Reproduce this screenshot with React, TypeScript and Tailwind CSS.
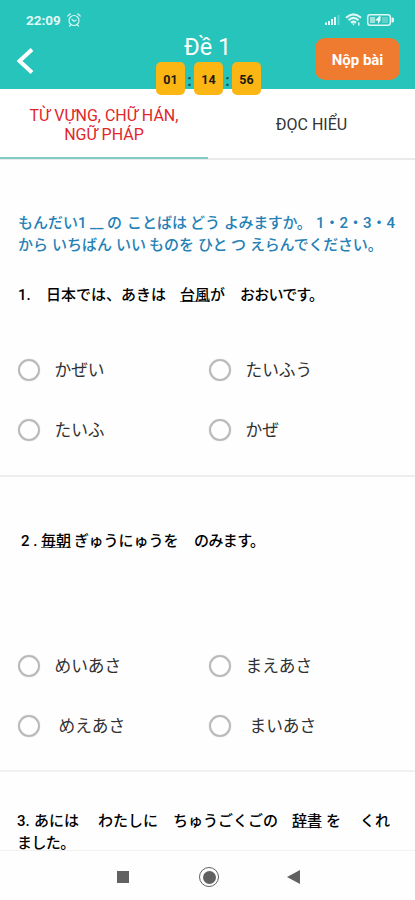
import React from "react";

type Segment = { text: string; width: string; underline?: boolean; tracking?: string };

function Line({ segments, className = "" }: { segments: Segment[]; className?: string }) {
  return (
    <div className={`flex whitespace-pre ${className}`}>
      {segments.map((s, i) => (
        <span
          key={i}
          className={`${s.width} shrink-0 ${s.tracking ?? ""} ${s.underline ? "underline decoration-[#666] decoration-1 underline-offset-1" : ""}`}
        >
          {s.text}
        </span>
      ))}
    </div>
  );
}

function Option({ label, indent = "ml-[14px]" }: { label: string; indent?: string }) {
  return (
    <label className="flex h-[60px] items-center">
      <span className="size-[22px] shrink-0 rounded-full border-[2.5px] border-[#b9b9b9] shadow-[0_0_1px_#b9b9b9]" />
      <span className={`${indent} mt-[2px] whitespace-nowrap pl-[0.500px] text-[16.7px] leading-6 text-[#303030]`}>{label}</span>
    </label>
  );
}

function TimeBox({ value }: { value: string }) {
  return (
    <span className="flex h-[33px] w-[29px] items-center justify-center rounded-[5px] bg-[#fbb614] pt-[3px] text-[12.5px] font-bold text-[#1d1a10]">
      {value}
    </span>
  );
}

function Colon() {
  return <span className="w-[9px] text-center text-[16px] leading-[37px] font-bold text-[#24504d]">:</span>;
}

function StatusIcons() {
  return (
    <svg className="mt-[12px] ml-auto h-4 w-[72px] overflow-visible" viewBox="0 0 72 16" fill="none">
      <g fill="#e3fbf8">
        <rect x="-1" y="10.500" width="2" height="2.500" />
        <rect x="2" y="9" width="2" height="4" />
        <rect x="5" y="7" width="2" height="6" />
        <rect x="8" y="5" width="2" height="8" />
        <rect x="11.500" y="3" width="2" height="10" opacity=".3" />
      </g>
      <g stroke="#dff8f5" strokeWidth="2">
        <path d="M20 5.800 Q27.500 -1 35 5.800" />
        <path d="M22.500 8.300 Q27.500 3.500 32.500 8.300" />
        <path d="M25 10.800 Q27.500 8.500 30 10.800" />
      </g>
      <path d="M26 11.500h3L27.500 13.500z M32 10.500h1.500v3H32z" fill="#dff8f5" />
      <rect x="41.700" y="2.700" width="22.600" height="10.600" rx="2.500" stroke="#dff8f5" strokeWidth="1.500" />
      <path d="M65.500 5.500h1.500l1 1v3l-1 1h-1.500z" fill="#dff8f5" />
      <rect x="44" y="5" width="5" height="6" fill="#9be4dd" />
      <rect x="56" y="5" width="6" height="6" fill="#64d1c8" />
      <path d="M53.500 4 49 8.500H52V12 L54.500 8.500V4z" fill="#e8fffc" />
    </svg>
  );
}

export default function App() {
  return (
    <div className="flex h-[900px] w-[415px] flex-col overflow-hidden bg-[#fefefe] font-[Roboto,'Noto_Sans_CJK_JP',sans-serif] text-black">
      <header className="relative h-[89px] shrink-0 bg-[#27c4bb]">
        <div className="flex h-8 pr-[17px] pl-[26px]">
          <span className="mt-[12px] text-[13.5px] leading-4 font-bold text-[#e0f9f6]">22:09</span>
          <svg className="mt-[12px] ml-[5px] size-4" viewBox="0 0 16 16" fill="none" stroke="#d7f6f3" strokeWidth="1.200" strokeLinecap="round">
            <circle cx="8" cy="8.500" r="5" />
            <path d="M1.800 4 4.300 1.800M14.200 4 11.700 1.800M4.500 13 3.500 14.200M11.500 13 12.500 14.200M6 7.500 8 9.200 10 8.200" />
          </svg>
          <StatusIcons />
        </div>
        <div className="flex">
          <svg className="mt-[14px] ml-[16px] h-[30px] w-[20px]" viewBox="0 0 20 30" fill="none" stroke="white" strokeWidth="4">
            <path d="M16 3.500 3.500 15 16 26.500" />
          </svg>
          <h1 className="ml-[148px] w-[48px] text-[23.5px] leading-[30px] whitespace-nowrap text-white">Đề 1</h1>
          <button className="mt-[6px] mr-[15px] ml-auto h-[42px] w-[85px] rounded-[10px] bg-[#ef7b31] pt-[3px] text-[15px] font-bold text-white">Nộp bài</button>
        </div>
        <div className="absolute top-[62px] left-[156px] flex">
          <TimeBox value="01" />
          <Colon />
          <TimeBox value="14" />
          <Colon />
          <TimeBox value="56" />
        </div>
      </header>

      <nav className="flex h-[71px] shrink-0 border-b-2 border-[#eaeaea] bg-white">
        <div className="-mb-[1px] flex w-[208px] justify-center border-b-2 border-[#80cbc6] pt-[18px] text-center text-[16px] leading-[18.500px] text-[#e1262a]">
          <span>TỪ VỰNG, CHỮ HÁN,<br />NGỮ PHÁP</span>
        </div>
        <div className="flex w-[207px] justify-center pt-[27px] text-[16px] leading-[18px] text-[#333]">ĐỌC HIỂU</div>
      </nav>

      <main className="h-[691px] shrink-0 overflow-hidden text-[15px] leading-[22px] font-medium">
        <section className="h-[317px] border-b-2 border-[#ededed] pt-[52px] pl-[18px]">
          <div className="text-[#2580b5]">
            <Line segments={[
              { text: "もんだい1", width: "w-[72px]" },
              { text: "__", width: "w-[17px]" },
              { text: "の", width: "w-[20px]" },
              { text: "ことばは", width: "w-[63px]" },
              { text: "どう", width: "w-[34px]" },
              { text: "よみますか。", width: "w-[92px]", tracking: "tracking-[-0.400px]" },
              { text: "1・2・3・4", width: "w-[90px]" },
            ]} />
            <Line segments={[
              { text: "から", width: "w-[34px]" },
              { text: "いちばん", width: "w-[64px]" },
              { text: "いい", width: "w-[33px]" },
              { text: "ものを", width: "w-[49px]" },
              { text: "ひと", width: "w-[33px]" },
              { text: "つ", width: "w-[19px]" },
              { text: "えらんでください。", width: "w-[140px]", tracking: "tracking-[-0.200px]" },
            ]} />
          </div>
          <Line className="mt-[28px]" segments={[
            { text: "1.", width: "w-[28px]" },
            { text: "日本では、あきは", width: "w-[134px]" },
            { text: "台風", width: "w-[30px]", underline: true },
            { text: "が", width: "w-[30px]" },
            { text: "おおいです。", width: "w-[95px]", tracking: "tracking-[-0.800px]" },
          ]} />
          <div className="mt-[34px] grid grid-cols-[191px_1fr] font-normal">
            <Option label="かぜい" />
            <Option label="たいふう" />
            <Option label="たいふ" />
            <Option label="かぜ" />
          </div>
        </section>

        <section className="h-[295px] border-b-2 border-[#f1f1f1] pt-[53px] pl-[18px]">
          <Line className="pl-[3px]" segments={[
            { text: "2 .", width: "w-[20px]" },
            { text: "毎朝", width: "w-[33px]", underline: true },
            { text: "ぎゅうにゅうを", width: "w-[120px]" },
            { text: "のみます。", width: "w-[80px]", tracking: "tracking-[-0.600px]" },
          ]} />
          <div className="mt-[84px] grid grid-cols-[191px_1fr] font-normal">
            <Option label="めいあさ" />
            <Option label="まえあさ" />
            <Option label="めえあさ" indent="ml-[18px]" />
            <Option label="まいあさ" indent="ml-[18px]" />
          </div>
        </section>

        <section className="pt-[39px] pl-[17px] leading-[21.500px]">
          <Line segments={[
            { text: "3.", width: "w-[17px]" },
            { text: "あには", width: "w-[64px]" },
            { text: "わたしに", width: "w-[75px]" },
            { text: "ちゅうごくごの", width: "w-[119px]" },
            { text: "辞書", width: "w-[34px]", underline: true },
            { text: "を", width: "w-[34px]" },
            { text: "くれ", width: "w-[40px]" },
          ]} />
          <Line segments={[{ text: "ました。", width: "w-[70px]", tracking: "tracking-[-0.600px]" }]} />
        </section>
      </main>

      <footer className="-mt-[1px] flex h-[50px] shrink-0 items-center border-t border-[#f2f2f2] pt-[3px]">
        <span className="ml-[117px] size-[12px] bg-[#616161]" />
        <span className="ml-[70px] flex size-5 items-center justify-center rounded-full border-[1.500px] border-[#616161]">
          <span className="size-[13px] rounded-full bg-[#616161]" />
        </span>
        <svg className="ml-[68px] h-[14px] w-[13px]" viewBox="0 0 13 14" fill="#616161">
          <path d="M0 7 13 0V14Z" />
        </svg>
      </footer>
    </div>
  );
}
